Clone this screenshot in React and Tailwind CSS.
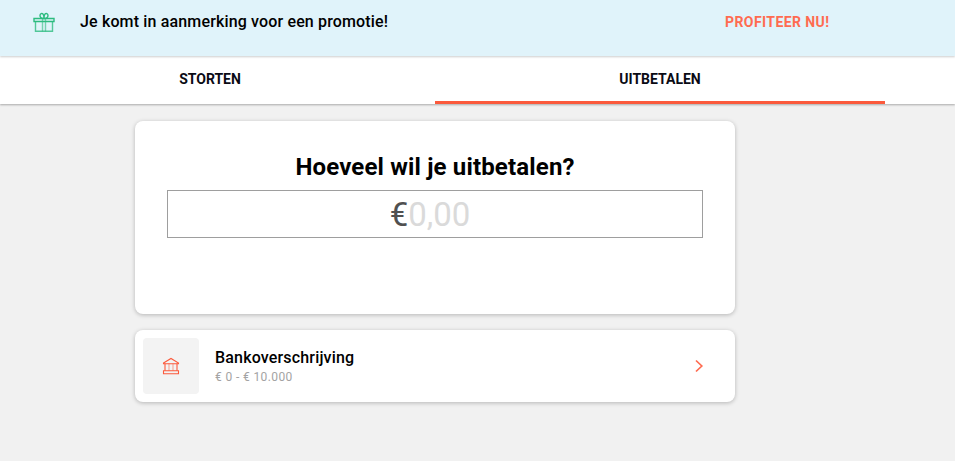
export default function App() {
  const font = { fontFamily: "Roboto, sans-serif" };
  return (
    <div style={font} className="h-[461px] w-[955px] overflow-hidden bg-[#f1f1f1] text-black">
      <div className="relative z-20 flex h-[56px] items-start bg-[#e0f3fa] shadow-[0_1px_2px_rgba(0,0,0,0.2)]">
        <div className="flex h-[44px] w-[80px] shrink-0 items-center pl-[33px]">
          <svg width="22" height="20" viewBox="0 0 22 20" fill="none" stroke="#2dbb7f" strokeWidth="1.4">
            <path d="M1 6.500h20v3H1z" />
            <path d="M2.500 9.500v9.800h17V9.500" opacity="0.8" />
            <path d="M9.500 6.500v13M12.500 6.500v13" opacity="0.6" />
            <path d="M11 6.500C9 6.500 7 6 7 3.500 7 1.500 9 1 10 2c.7.7 1 2.500 1 4.500zM11 6.500c2 0 4-.5 4-3 0-2-2-2.500-3-1.500-.7.7-1 2.500-1 4.500z" />
          </svg>
        </div>
        <div className="flex h-[44px] w-[643px] items-center text-[16px] font-medium tracking-[0.15px]">Je komt in aanmerking voor een promotie!</div>
        <div className="flex h-[44px] items-center pl-[2px] text-[14px] font-bold tracking-[0.42px] text-[#ff6b50]">PROFITEER NU!</div>
      </div>
      <div className="relative z-10 flex h-[48px] bg-white pr-[70px] shadow-[0_1px_2px_rgba(0,0,0,0.3)]">
        <div className="flex w-[435px] items-center justify-center pb-[2px] text-[14px] font-bold leading-none text-[#0a0a14]"><span className="mr-[15px]">STORTEN</span></div>
        <div className="flex flex-1 items-center justify-center border-b-[3px] border-[#fb5a3c] pt-[1px] text-[14px] font-bold text-[#0a0a14]">UITBETALEN</div>
      </div>
      <div className="ml-[135px] mt-[17px] w-[600px]">
        <div className="flex h-[193px] flex-col items-center rounded-[8px] bg-white px-[32px] pt-[32px] shadow-[0_1px_4px_rgba(0,0,0,0.25)]">
          <h1 className="text-[24px] font-bold leading-[28px] tracking-[0.16px]">Hoeveel wil je uitbetalen?</h1>
          <div className="mt-[9px] flex h-[48px] w-full items-center justify-center border border-[#9e9e9e] pr-[10px] text-[33px] font-normal leading-none">
            <span className="text-[#505050]">€</span><span className="text-[#dadada]">0,00</span>
          </div>
        </div>
        <div className="mt-[16px] flex h-[72px] items-center rounded-[8px] bg-white p-[8px] shadow-[0_1px_4px_rgba(0,0,0,0.25)]">
          <div className="flex h-[56px] w-[56px] shrink-0 items-center justify-center rounded-[4px] bg-[#f3f3f3]">
            <svg width="18" height="18" viewBox="0 0 18 18" fill="none" stroke="#fb5a3c" strokeWidth="1.1">
              <path d="M1.500 6 9 1.500 16.500 6v.8h-15z" />
              <path d="M3 6.800v7M15 6.800v7" />
              <path d="M7 6.800v7M11 6.800v7" opacity="0.5" />
              <path d="M1.500 13.800h15v3h-15z" />
            </svg>
          </div>
          <div className="ml-[16px] flex-1">
            <div className="text-[16px] font-medium leading-[20px] tracking-[0.17px]">Bankoverschrijving</div>
            <div className="mt-[2px] text-[12px] leading-[14px] tracking-[0.38px] text-[#a3a3a3]">€ 0 - € 10.000</div>
          </div>
          <svg className="mr-[23px]" width="10" height="14" viewBox="0 0 10 14" fill="none" stroke="#ff6b50" strokeWidth="1.7">
            <path d="M2 1.500 7.800 7 2 12.500" />
          </svg>
        </div>
      </div>
    </div>
  );
}
